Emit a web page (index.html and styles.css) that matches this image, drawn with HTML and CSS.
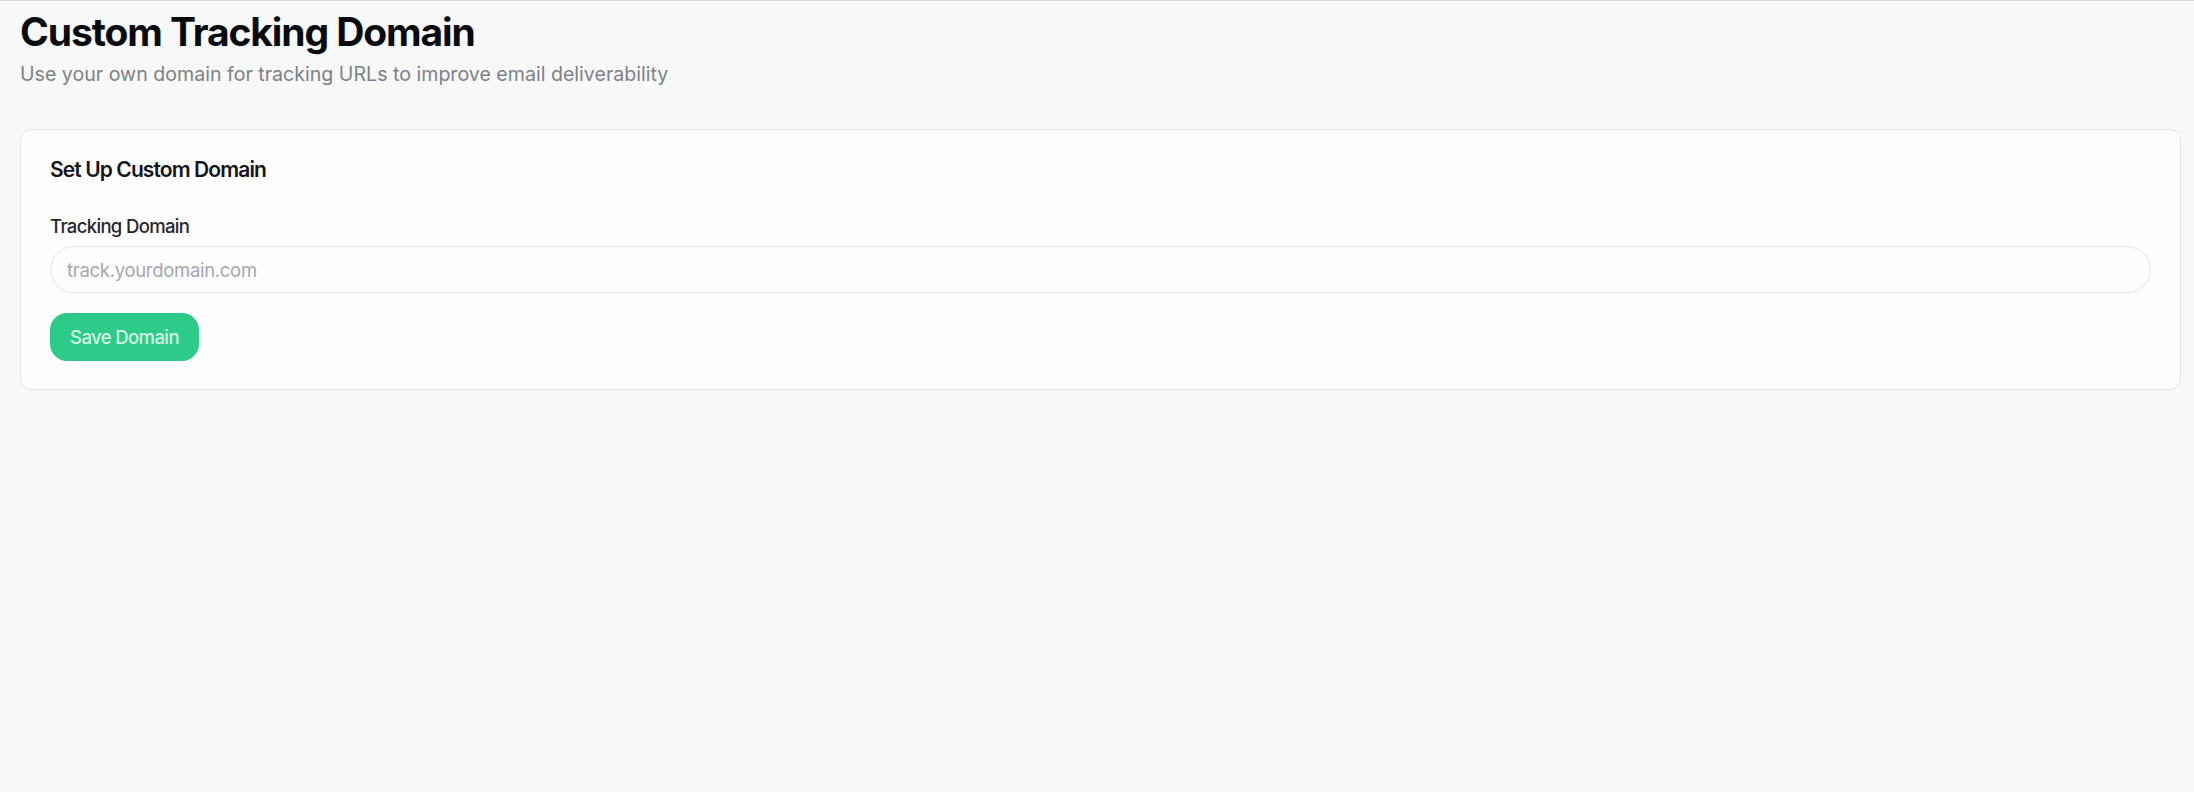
FILE: index.html
```html
<!DOCTYPE html>
<html lang="en">
<head>
<meta charset="utf-8">
<title>Custom Tracking Domain</title>
<link rel="stylesheet" href="styles.css">
</head>
<body>
<main class="page">
  <header class="page-header">
    <h1 class="page-title">Custom Tracking Domain</h1>
    <p class="page-subtitle">Use your own domain for tracking URLs to improve email deliverability</p>
  </header>
  <section class="card">
    <h2 class="card-title">Set Up Custom Domain</h2>
    <form class="form">
      <label class="field-label" for="domain">Tracking Domain</label>
      <input class="field-input" id="domain" type="text" placeholder="track.yourdomain.com">
      <button class="btn-save" type="button">Save Domain</button>
    </form>
  </section>
</main>
</body>
</html>
```
FILE: styles.css
```css
* { box-sizing: border-box; }
html, body { margin: 0; height: 100%; }
body {
  background: #f7f8f8;
  border-top: 1px solid #d6d8dc;
  font-family: Inter, "Noto Sans", "Liberation Sans", sans-serif;
  color: #0b0c10;
}
.page {
  padding: 6px 13px 0 20px;
}
.page-header { display: flex; flex-direction: column; }
.page-title {
  margin: 0;
  font-size: 39px;
  line-height: 50px;
  font-weight: 700;
  letter-spacing: -1.1px;
  color: #0a0b0f;
}
.page-subtitle {
  margin: 3px 0 0;
  font-size: 19.6px;
  line-height: 28px;
  color: #7e8188;
  letter-spacing: 0;
}
.card {
  margin-top: 41px;
  background: #fdfdfd;
  border: 1px solid #e3e5e8;
  border-radius: 11px;
  padding: 28px 29px 28px 29px;
}
.card-title {
  margin: 0;
  font-size: 21px;
  line-height: 24px;
  font-weight: 600;
  color: #15161a;
  letter-spacing: -0.9px;
}
.form {
  display: flex;
  flex-direction: column;
  align-items: flex-start;
  margin-top: 30px;
}
.field-label {
  font-size: 18.5px;
  line-height: 28px;
  font-weight: 500;
  color: #25272c;
  letter-spacing: -0.65px;
}
.field-input {
  margin-top: 6px;
  width: 100%;
  height: 47px;
  border: 1px solid #e3e5e8;
  border-radius: 999px;
  background: #fdfdfd;
  padding: 0 16px;
  font-family: inherit;
  font-size: 18.5px;
  letter-spacing: -0.3px;
  color: #111;
  outline: none;
}
.field-input::placeholder { color: #a4a7ad; }
.btn-save {
  margin-top: 20px;
  height: 48px;
  width: 149px;
  border: none;
  border-radius: 17px;
  background: #2dcb89;
  color: #d3f6e4;
  font-family: inherit;
  font-size: 18.5px;
  font-weight: 500;
  letter-spacing: -0.6px;
  padding: 0;
}
```
